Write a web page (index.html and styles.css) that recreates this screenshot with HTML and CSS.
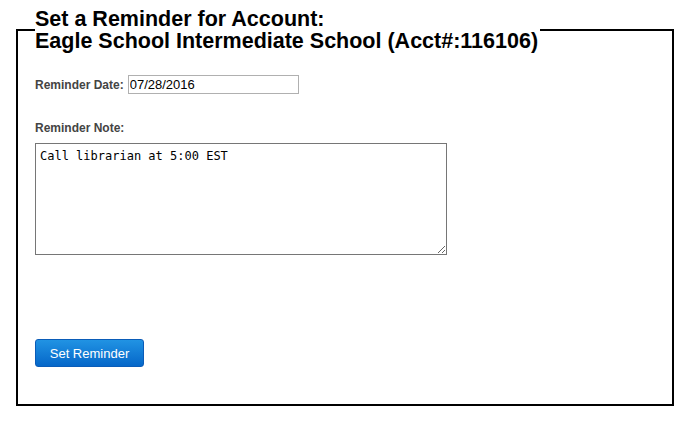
FILE: index.html
```html
<!DOCTYPE html>
<html lang="en">
<head>
    <meta charset="UTF-8">
    <title>Set a Reminder</title>
    <link rel="stylesheet" href="styles.css">
</head>
<body>
    <fieldset class="reminder-box">
        <legend>Set a Reminder for Account:<br>Eagle School Intermediate School (Acct#:116106)</legend>

        <div class="field-row">
            <label for="reminderDate">Reminder Date:</label>
            <input type="text" id="reminderDate" value="07/28/2016">
        </div>

        <div class="field-block">
            <label for="reminderNote">Reminder Note:</label>
            <textarea id="reminderNote">Call librarian at 5:00 EST</textarea>
        </div>

        <button class="btn-blue">Set Reminder</button>
    </fieldset>
</body>
</html>
```

FILE: styles.css
```css
body {
    margin: 8px;
    font-family: Arial, "Liberation Sans", sans-serif;
    background-color: #fff;
}

.reminder-box {
    box-sizing: border-box;
    width: 658px;
    margin: 0 0 0 8px;
    padding: 0 17px 37px 17px;
    border: 2px solid #000;
}

.reminder-box legend {
    padding: 0 2px 0 0;
    font-size: 21.5px;
    line-height: 22px;
    font-weight: bold;
    color: #000;
}

label {
    font-size: 12px;
    font-weight: bold;
    color: #444;
}

.field-row {
    display: flex;
    align-items: baseline;
    gap: 4px;
    margin-top: 23px;
}

.field-row input {
    width: 171px;
    box-sizing: border-box;
    height: 19px;
    padding: 1px 1px;
    border: 1px solid #b0b0b0;
    font-family: Arial, "Liberation Sans", sans-serif;
    font-size: 13px;
    color: #000;
}

.field-block {
    margin-top: 27px;
}

.field-block label {
    display: block;
    line-height: 14px;
    margin-bottom: 8px;
}

.field-block textarea {
    display: block;
    box-sizing: border-box;
    width: 412px;
    height: 112px;
    padding: 5px 4px;
    border: 1px solid #767676;
    font-family: "DejaVu Sans Mono", monospace;
    font-size: 12px;
    color: #000;
}

.btn-blue {
    display: block;
    margin-top: 84px;
    width: 109px;
    height: 28px;
    padding: 0;
    border: 1px solid #0a5cb8;
    border-radius: 3px;
    background: linear-gradient(#2193e3, #0567c9);
    color: #fff;
    font-family: Arial, "Liberation Sans", sans-serif;
    font-size: 13px;
    cursor: pointer;
}
```
